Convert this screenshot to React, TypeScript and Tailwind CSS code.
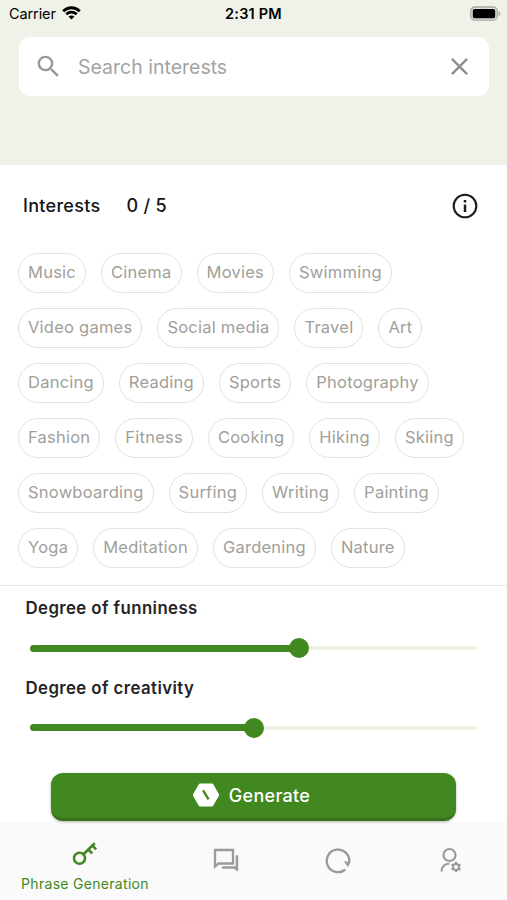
import React, { useState } from 'react';
import { MdClose, MdSearch } from 'react-icons/md';

const MAX_INTERESTS = 5;

const INTEREST_ROWS: string[][] = [
  ['Music', 'Cinema', 'Movies', 'Swimming'],
  ['Video games', 'Social media', 'Travel', 'Art'],
  ['Dancing', 'Reading', 'Sports', 'Photography'],
  ['Fashion', 'Fitness', 'Cooking', 'Hiking', 'Skiing'],
  ['Snowboarding', 'Surfing', 'Writing', 'Painting'],
  ['Yoga', 'Meditation', 'Gardening', 'Nature'],
];

function StatusBar() {
  return (
    <div className="grid h-7 grid-cols-3 items-center pl-[9px] pr-[6px] text-black">
      <div className="flex items-center gap-[6px]">
        <span className="text-[14.5px] leading-7 tracking-[-0.1px]">Carrier</span>
        <svg className="-mt-[2px]" width="19" height="14" viewBox="0 0 19 14" fill="none" stroke="currentColor" strokeWidth="2.8">
          <path d="M1.2 5.2C5.9.6 13.1.6 17.8 5.2" />
          <path d="M4.3 8.3c2.9-2.8 7.5-2.8 10.4 0" />
          <path d="M9.5 13.6 6.5 10.6c1.7-1.5 4.3-1.5 6 0z" fill="currentColor" stroke="none" />
        </svg>
      </div>
      <span className="-ml-[3px] text-center text-[14.5px] font-semibold leading-7 tracking-[0.2px]">2:31 PM</span>
      <svg className="-mt-px justify-self-end" width="31" height="16" viewBox="0 0 31 16">
        <rect x="0.8" y="1" width="26.4" height="13.2" rx="4" fill="#dcdfd6" stroke="#a9aba4" strokeWidth="1.3" />
        <rect x="2.8" y="3" width="22.4" height="9.2" rx="1.8" fill="#000" />
        <path d="M28.5 5.2c2.3 1 2.3 3.9 0 4.9z" fill="#a9aba4" />
      </svg>
    </div>
  );
}

function InfoIcon() {
  return (
    <svg width="26" height="26" viewBox="0 0 26 26" fill="none" stroke="#1c1c1e">
      <circle cx="13" cy="13" r="11.3" strokeWidth="2.1" />
      <path d="M13 11.5v7.5" strokeWidth="2.5" />
      <path d="M13 7v2.5" strokeWidth="2.5" />
    </svg>
  );
}

function HexagonIcon() {
  return (
    <svg width="28" height="26" viewBox="0 0 28 26">
      <path d="M8 1.5h12q.8 0 1.2.7l5.6 9.8q.6 1 0 2l-5.6 9.8q-.4.7-1.2.7H8q-.8 0-1.2-.7L1.2 14q-.6-1 0-2l5.6-9.8q.4-.7 1.2-.7z" fill="#fff" />
      <path d="M11 8.3 16.6 17.3" stroke="#428821" strokeWidth="2.4" />
    </svg>
  );
}

function KeyIcon() {
  return (
    <svg width="26" height="24" viewBox="0 0 26 24" fill="none" stroke="#428821" strokeWidth="2.6">
      <circle cx="7.5" cy="16.2" r="5.5" />
      <path d="M11.5 12.2 22.7 1.3M20.3 3.4l3.9 3.9M16.2 7.5l4 3.9" />
    </svg>
  );
}

function ChatIcon() {
  return (
    <svg width="27" height="25" viewBox="0 0 27 25" fill="none">
      <path d="M2 2h18v13.500H5.500L2 18.500z" stroke="#9a9b97" strokeWidth="2.300" />
      <path d="M22 7.300h3.200v16.400l-4.200-3H9v-2.500h13.700V7.300z" fill="#9a9b97" />
    </svg>
  );
}

function ReloadIcon() {
  return (
    <svg width="28" height="28" viewBox="0 0 28 28" fill="none" stroke="#9a9b97" strokeWidth="2.3">
      <path d="M21.3 22.5A11.3 11.3 0 1 1 25.2 15.5" />
      <path d="M19.8 14.2 26.5 15 24 20.3z" fill="#9a9b97" stroke="none" />
    </svg>
  );
}

function UserGearIcon() {
  return (
    <svg width="22" height="26" viewBox="0 0 22 26" fill="none" stroke="#9a9b97">
      <circle cx="9.5" cy="8" r="6" strokeWidth="2.2" />
      <path d="M1.5 24.5C1.5 19.8 5 16.5 9.5 16.5" strokeWidth="2.2" />
      <circle cx="16" cy="20" r="3" strokeWidth="2.1" />
      <path
        d="M16 14.8v2.200M16 23v2.200M11.500 17.400l1.900 1.100M18.600 21.500l1.900 1.100M11.500 22.600l1.900-1.100M18.600 18.500l1.900-1.100"
        strokeWidth="2.2"
      />
    </svg>
  );
}

function DegreeSlider({ label, value }: { label: string; value: number }) {
  return (
    <div>
      <h3 className="pl-[25.5px] text-[16.8px] font-semibold leading-6 tracking-[0.42px] text-[#242426]">{label}</h3>
      <div className="ml-[30px] mr-[30px] mt-[18px] flex h-5 items-center">
        <div className="h-[7px] rounded-l-full bg-[#428821]" style={{ width: `calc(${value}% - 8.5px)` }}></div>
        <div className="-ml-px size-5 shrink-0 rounded-full bg-[#428821]"></div>
        <div className="h-1 flex-1 rounded-r-full bg-[#f0f2e6]"></div>
      </div>
    </div>
  );
}

export default function App() {
  const [selected, setSelected] = useState<string[]>([]);

  const toggleInterest = (name: string) => {
    setSelected((prev) => {
      if (prev.includes(name)) return prev.filter((item) => item !== name);
      return prev.length < MAX_INTERESTS ? [...prev, name] : prev;
    });
  };

  return (
    <div className="flex h-[900px] w-[507px] flex-col overflow-hidden bg-white font-['Inter','Liberation_Sans',sans-serif]">
      {/* Header with search */}
      <header className="h-[164.5px] shrink-0 bg-[#eff2e8]">
        <StatusBar />
        <div className="ml-[19px] mr-[18px] mt-[9px] flex h-[59px] items-center rounded-[11px] bg-white px-[15px]">
          <MdSearch size={29} className="text-[#999]" />
          <span className="ml-[15px] mt-[2px] flex-1 text-[19.5px] text-[#a3a3a3]">Search interests</span>
          <MdClose size={29} className="text-[#8e8e8e]" />
        </div>
      </header>

      {/* Interests */}
      <section className="h-[420.5px] shrink-0">
        <div className="flex items-center pl-[23px] pr-[29px] pt-[27px] text-lg font-medium tracking-[0.3px] text-[#161618]">
          <span>Interests</span>
          <span className="ml-[26px] flex-1">{selected.length} / {MAX_INTERESTS}</span>
          <InfoIcon />
        </div>
        <div className="mt-[33px] flex flex-col gap-[15px] pl-[18px]">
          {INTEREST_ROWS.map((row, idx) => (
            <div key={idx} className="flex gap-[15px]">
              {row.map((name) => (
                <button
                  key={name}
                  onClick={() => toggleInterest(name)}
                  className={`h-10 cursor-pointer whitespace-nowrap rounded-full border px-[9px] text-[16.5px] tracking-[0.235px] ${
                    selected.includes(name)
                      ? 'border-[#428821] text-[#428821]'
                      : 'border-[#e2e2e0] text-[#9fa09a]'
                  }`}
                >
                  {name}
                </button>
              ))}
            </div>
          ))}
        </div>
      </section>

      {/* Sliders and submit */}
      <section className="h-[237px] shrink-0 border-t border-[#e8e8e8] pt-[10px]">
        <div className="flex flex-col gap-[17.5px]">
          <DegreeSlider label="Degree of funniness" value={60} />
          <DegreeSlider label="Degree of creativity" value={50} />
        </div>
        <button className="relative mx-auto mt-[35px] flex h-12 w-[405px] items-center justify-center gap-[9px] rounded-[12px] border-b-[3px] border-[#367019] bg-[#428821] pr-[5px] text-[18px] font-medium tracking-[0.3px] text-white shadow-[0_1px_3px_rgba(0,0,0,0.3)]">
          <HexagonIcon />
          Generate
        </button>
      </section>

      {/* Bottom tabs */}
      <nav className="flex flex-1 bg-[#fafafa] text-[#9a9b97]">
        <div className="flex w-[170px] flex-col items-center pt-[20px]">
          <KeyIcon />
          <span className="mt-[8px] text-[14px] leading-5 tracking-[0.3px] text-[#428821]">Phrase Generation</span>
        </div>
        <div className="flex w-[112px] justify-center pt-[26px]"><ChatIcon /></div>
        <div className="flex w-[112px] justify-center pt-[24.5px]"><ReloadIcon /></div>
        <div className="flex w-[113px] justify-center pt-[25px]"><UserGearIcon /></div>
      </nav>
    </div>
  );
}
